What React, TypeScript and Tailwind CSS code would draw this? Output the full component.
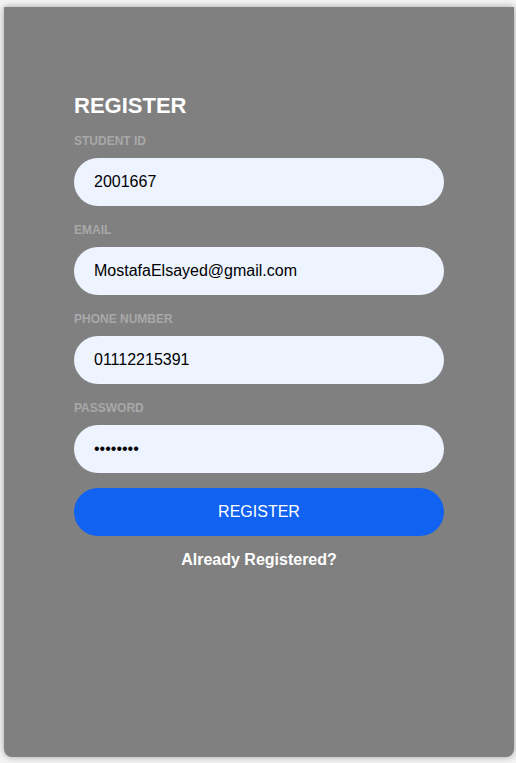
import React from "react";

const fields = [
  { label: "Student ID", type: "text", value: "2001667" },
  { label: "Email", type: "email", value: "MostafaElsayed@gmail.com" },
  { label: "Phone Number", type: "text", value: "01112215391" },
  { label: "Password", type: "password", value: "12345678" },
];

const App = () => {
  return (
    <div className="min-h-screen bg-[#f4f4f4] pt-[7px] pl-[4px] font-['Liberation_Sans',Arial,sans-serif]">
      <div className="w-[510px] h-[750px] bg-[#808080] rounded-b-lg shadow-[0_0_7px_rgba(0,0,0,0.35)] flex justify-center">
        <form className="w-[370px] pt-[86px] flex flex-col">
          <h1 className="text-[22px] leading-[25px] font-bold text-white mb-[16px]">REGISTER</h1>
          {fields.map((f, i) => (
            <div key={f.label} className={i === 0 ? "" : "mt-[17px]"}>
              <label className="block text-[12px] leading-[14px] font-bold uppercase text-[#a8a8a8] mb-[10px]">
                {f.label}
              </label>
              <input
                type={f.type}
                defaultValue={f.value}
                className="w-full h-[48px] rounded-full bg-[#edf3ff] px-5 text-[16px] text-black outline-none"
              />
            </div>
          ))}
          <button
            type="submit"
            className="mt-[15px] h-[48px] w-full rounded-full bg-[#1162f0] text-white text-[16px]"
          >
            REGISTER
          </button>
          <p className="mt-[15px] text-center text-white font-bold text-[16px] leading-[18px]">
            Already Registered?
          </p>
        </form>
      </div>
    </div>
  );
};

export default App;
